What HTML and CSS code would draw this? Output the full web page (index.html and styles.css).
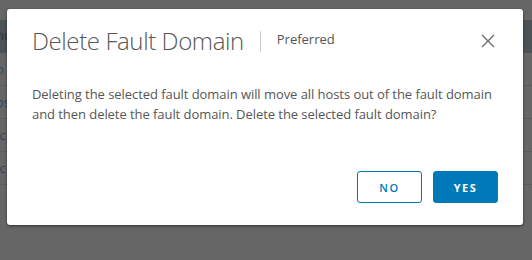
FILE: index.html
```html
<!DOCTYPE html>
<html lang="en">

<head>
  <meta charset="UTF-8">
  <meta name="viewport" content="width=device-width, initial-scale=1.0">
  <title>Delete Fault Domain</title>
  <link rel="stylesheet" href="styles.css">
</head>

<body>
  <!-- grid behind the overlay -->
  <div class="grid">
    <div class="grid-row grid-head"><span class="cell">nc</span></div>
    <div class="grid-row"><span class="cell link">b</span></div>
    <div class="grid-row"><span class="cell link">os</span></div>
    <div class="grid-row"><span class="cell link">.c</span></div>
    <div class="grid-row"><span class="cell link">.c</span></div>
    <div class="grid-row grid-last"></div>
  </div>

  <div class="modal">
    <div class="modal-header">
      <h3 class="modal-title">Delete Fault Domain</h3>
      <span class="modal-divider"></span>
      <span class="modal-sub">Preferred</span>
      <button class="close" aria-label="Close">
        <svg width="14" height="14" viewBox="0 0 14 14">
          <path d="M1 1 L13 13 M13 1 L1 13" stroke="#6a6a6a" stroke-width="1.4" fill="none" />
        </svg>
      </button>
    </div>
    <div class="modal-body">
      Deleting the selected fault domain will move all hosts out of the fault domain
      and then delete the fault domain. Delete the selected fault domain?
    </div>
    <div class="modal-footer">
      <button class="btn btn-outline">No</button>
      <button class="btn btn-primary">Yes</button>
    </div>
  </div>
</body>

</html>
```

FILE: styles.css
```css
body {
  margin: 0;
  background-color: #666;
  font-family: "Open Sans", Arial, sans-serif;
  color: #565656;
  width: 532px;
  height: 260px;
  overflow: hidden;
  position: relative;
}

/* Grid behind the overlay */
.grid {
  padding-top: 20px;
}

.grid-row {
  height: 32px;
  border-bottom: 1px solid #5b5b5b;
  display: flex;
  align-items: center;
}

.grid-head {
  height: 33px;
  background-color: #4c5356;
  border-bottom: none;
  align-items: flex-start;
  padding-top: 6px;
  box-sizing: border-box;
}

.grid-last {
  border-bottom: none;
}

.cell {
  font-size: 13px;
  margin-left: -4px;
  color: #333;
}

.cell.link {
  color: #2c4a60;
}

/* Modal */
.modal {
  position: absolute;
  left: 7px;
  top: 9px;
  width: 516px;
  height: 216px;
  box-sizing: border-box;
  background-color: #fff;
  border-radius: 3px;
  box-shadow: 0 1px 3px rgba(0, 0, 0, 0.5);
  padding: 16px 25px 22px 25px;
  display: flex;
  flex-direction: column;
}

.modal-header {
  display: flex;
  align-items: center;
  height: 32px;
}

.modal-title {
  margin: 0;
  font-size: 24px;
  font-weight: 300;
  line-height: 32px;
  letter-spacing: -0.4px;
  color: #565656;
}

.modal-divider {
  width: 1px;
  height: 21px;
  background-color: #ccc;
  margin: 0 16px 0 16px;
}

.modal-sub {
  font-size: 13px;
  color: #565656;
  margin-top: -4px;
}

.close {
  margin-left: auto;
  margin-right: 3px;
  border: none;
  background: none;
  padding: 0;
  width: 14px;
  height: 14px;
  cursor: pointer;
}

.close svg {
  display: block;
}

.modal-body {
  margin-top: 27px;
  font-size: 13px;
  line-height: 20px;
  letter-spacing: -0.06px;
  color: #565656;
}

.modal-footer {
  margin-top: auto;
  display: flex;
  justify-content: flex-end;
  gap: 11px;
}

.btn {
  width: 65px;
  height: 32px;
  border-radius: 3px;
  font-family: "Open Sans", Arial, sans-serif;
  font-size: 11px;
  font-weight: 600;
  letter-spacing: 0.14em;
  text-transform: uppercase;
  cursor: pointer;
  padding: 0;
}

.btn-outline {
  background-color: #fff;
  border: 1px solid #0079b8;
  color: #0079b8;
}

.btn-primary {
  background-color: #0079b8;
  border: 1px solid #0079b8;
  color: #fff;
  font-weight: 700;
}
```
